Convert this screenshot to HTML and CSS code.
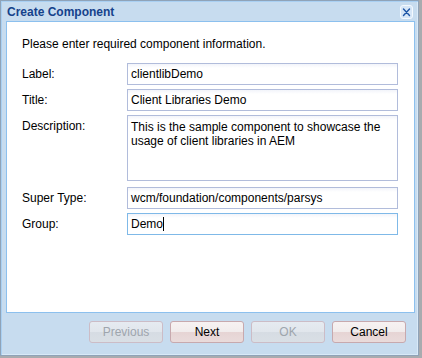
FILE: index.html
```html
<!DOCTYPE html>
<html>
<head>
<meta charset="utf-8">
<link rel="stylesheet" href="styles.css">
</head>
<body>
<div class="window">
  <div class="header">
    <span class="title">Create Component</span>
    <span class="close">
      <svg width="13" height="14" viewBox="0 0 13 14">
        <rect x="0.5" y="0.5" width="12" height="13" rx="2.5" fill="#d6e6f7" stroke="#f4f9fe"/>
        <path d="M3.5 4 L9.5 10.5 M9.5 4 L3.5 10.5" stroke="#1f56a6" stroke-width="1.4" stroke-linecap="round"/>
      </svg>
    </span>
  </div>
  <div class="panel">
    <p class="intro">Please enter required component information.</p>
    <div class="form">
      <label class="lbl">Label:</label>
      <div class="field">clientlibDemo</div>
      <label class="lbl">Title:</label>
      <div class="field">Client Libraries Demo</div>
      <label class="lbl">Description:</label>
      <div class="field area">This is the sample component to showcase the usage of client libraries in AEM</div>
      <label class="lbl gap">Super Type:</label>
      <div class="field gap">wcm/foundation/components/parsys</div>
      <label class="lbl">Group:</label>
      <div class="field focus">Demo<span class="caret"></span></div>
    </div>
  </div>
  <div class="footer">
    <button class="btn disabled">Previous</button>
    <button class="btn">Next</button>
    <button class="btn disabled">OK</button>
    <button class="btn">Cancel</button>
  </div>
</div>
</body>
</html>
```
FILE: styles.css
```css
html, body {
  margin: 0;
  padding: 0;
}
body {
  width: 422px;
  height: 358px;
  background: #a8abaf;
  font-family: "Liberation Sans", Arial, sans-serif;
  font-size: 12px;
  color: #000;
  overflow: hidden;
}
.window {
  box-sizing: border-box;
  width: 419px;
  height: 356px;
  background: #c7dcef;
  border: 1px solid #8fa3b8;
  box-shadow: inset 1px 1px 0 #a9d0f3, inset -1px -1px 0 #d9e9f7;
  display: flex;
  flex-direction: column;
}
.header {
  height: 20px;
  display: flex;
  align-items: center;
  justify-content: space-between;
  padding: 0 6px 0 6px;
}
.title {
  font-weight: bold;
  color: #15428b;
  font-size: 12px;
  line-height: 20px;
  padding-top: 1px;
}
.close {
  display: flex;
  margin-top: 2px;
  margin-right: -1px;
}
.panel {
  box-sizing: border-box;
  margin-left: 5px;
  width: 409px;
  height: 292px;
  background: #fff;
  border: 1px solid #8cc0ee;
  padding: 15px 0 0 15px;
}
.intro {
  margin: 0;
  line-height: 14px;
}
.form {
  margin-top: 12px;
  display: grid;
  grid-template-columns: 105px 271px;
  row-gap: 4px;
}
.lbl {
  padding-top: 4px;
  line-height: 14px;
}
.field {
  box-sizing: border-box;
  height: 22px;
  border: 1px solid #b1bcdb;
  background: linear-gradient(#f2f4fa, #fff 4px);
  padding: 3px 3px;
  line-height 14px;
  line-height: 14px;
  white-space: nowrap;
}
.field.area {
  height: 66px;
  white-space: normal;
  padding-top: 4px;
}
.field.focus {
  border-color: #7fb9e8;
}
.gap {
  margin-top: 2px;
}
.caret {
  display: inline-block;
  width: 1px;
  height: 14px;
  background: #000;
  vertical-align: -3px;
}
.footer {
  flex: 1;
  display: flex;
  justify-content: flex-end;
  align-items: flex-start;
  gap: 7px;
  padding: 8px 12px 0 0;
}
.btn {
  box-sizing: border-box;
  width: 74px;
  height: 22px;
  border: 1px solid #c7a9ae;
  border-radius: 3px;
  background: linear-gradient(#f7f2f2 0, #f1ecec 50%, #e6d4d4 50%, #e9dbdb 100%);
  font-family: "Liberation Sans", Arial, sans-serif;
  font-size: 12px;
  color: #000;
  padding: 0;
  line-height: 20px;
}
.btn.disabled {
  border-color: #ccbcc6;
  background: linear-gradient(#e6ebf1 0, #e1e6ec 50%, #d6dce3 50%, #d9dfe5 100%);
  color: #9ea5ad;
}
```
